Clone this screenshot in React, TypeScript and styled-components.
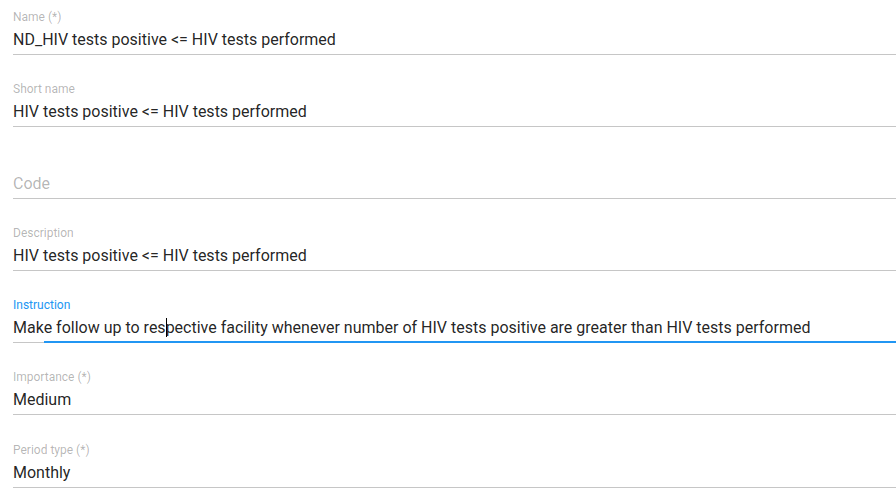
import styled, { createGlobalStyle } from 'styled-components';

type FieldProps = {
  readonly label?: string;
  readonly value?: string;
  readonly placeholder?: string;
  readonly focused?: boolean;
  readonly caretAt?: number;
};

const GlobalStyle = createGlobalStyle`
  html, body {
    margin: 0;
    padding: 0;
    background: #ffffff;
  }
  body {
    font-family: Roboto, "Liberation Sans", sans-serif;
    overflow: hidden;
  }
`;

const fields: FieldProps[] = [
  { label: 'Name (*)', value: 'ND_HIV tests positive <= HIV tests performed' },
  { label: 'Short name', value: 'HIV tests positive <= HIV tests performed' },
  { placeholder: 'Code' },
  { label: 'Description', value: 'HIV tests positive <= HIV tests performed' },
  {
    label: 'Instruction',
    value:
      'Make follow up to respective facility whenever number of HIV tests positive are greater than HIV tests performed',
    focused: true,
    caretAt: 21,
  },
  { label: 'Importance (*)', value: 'Medium' },
  { label: 'Period type (*)', value: 'Monthly' },
];

const TextField = ({ label, value, placeholder, focused = false, caretAt }: FieldProps) => {
  const renderValue = () => {
    if (!value) return <Placeholder>{placeholder}</Placeholder>;
    if (caretAt === undefined) return value;
    return (
      <>
        {value.slice(0, caretAt)}
        <Caret />
        {value.slice(caretAt)}
      </>
    );
  };

  return (
    <StyledField>
      <StyledLabel $focused={focused}>{label ?? '\u00a0'}</StyledLabel>
      <StyledValue>{renderValue()}</StyledValue>
      {focused ? <FocusLine /> : null}
    </StyledField>
  );
};

export default function App() {
  return (
    <>
      <GlobalStyle />
      <StyledForm>
        {fields.map((f) => (
          <TextField key={f.label ?? f.placeholder} {...f} />
        ))}
      </StyledForm>
    </>
  );
}

const StyledForm = styled.div`
  display: flex;
  flex-direction: column;
  padding-left: 13px;
`;
const StyledField = styled.div`
  position: relative;
  display: flex;
  flex-direction: column;
  padding-top: 26px;
  padding-bottom: 2px;
  border-bottom: 1px solid #c6c6c6;
  &:first-child {
    padding-top: 9px;
  }
  &:last-child {
    padding-top: 27px;
  }
`;
const StyledLabel = styled.div<{ $focused: boolean }>`
  font-size: 12px;
  line-height: 16px;
  color: ${(props) => (props.$focused ? '#2196f3' : 'rgba(0, 0, 0, 0.3)')};
  white-space: nowrap;
`;
const StyledValue = styled.div`
  margin-top: 3px;
  font-size: 16px;
  line-height: 24px;
  color: rgba(0, 0, 0, 0.87);
  white-space: nowrap;
`;
const Placeholder = styled.span`
  color: rgba(0, 0, 0, 0.3);
`;
const Caret = styled.span`
  display: inline-block;
  width: 1px;
  height: 19px;
  margin-right: -1px;
  vertical-align: -4px;
  background: #000000;
`;
const FocusLine = styled.div`
  position: absolute;
  left: 31px;
  right: 0;
  bottom: -1px;
  height: 2px;
  background: #2196f3;
`;
